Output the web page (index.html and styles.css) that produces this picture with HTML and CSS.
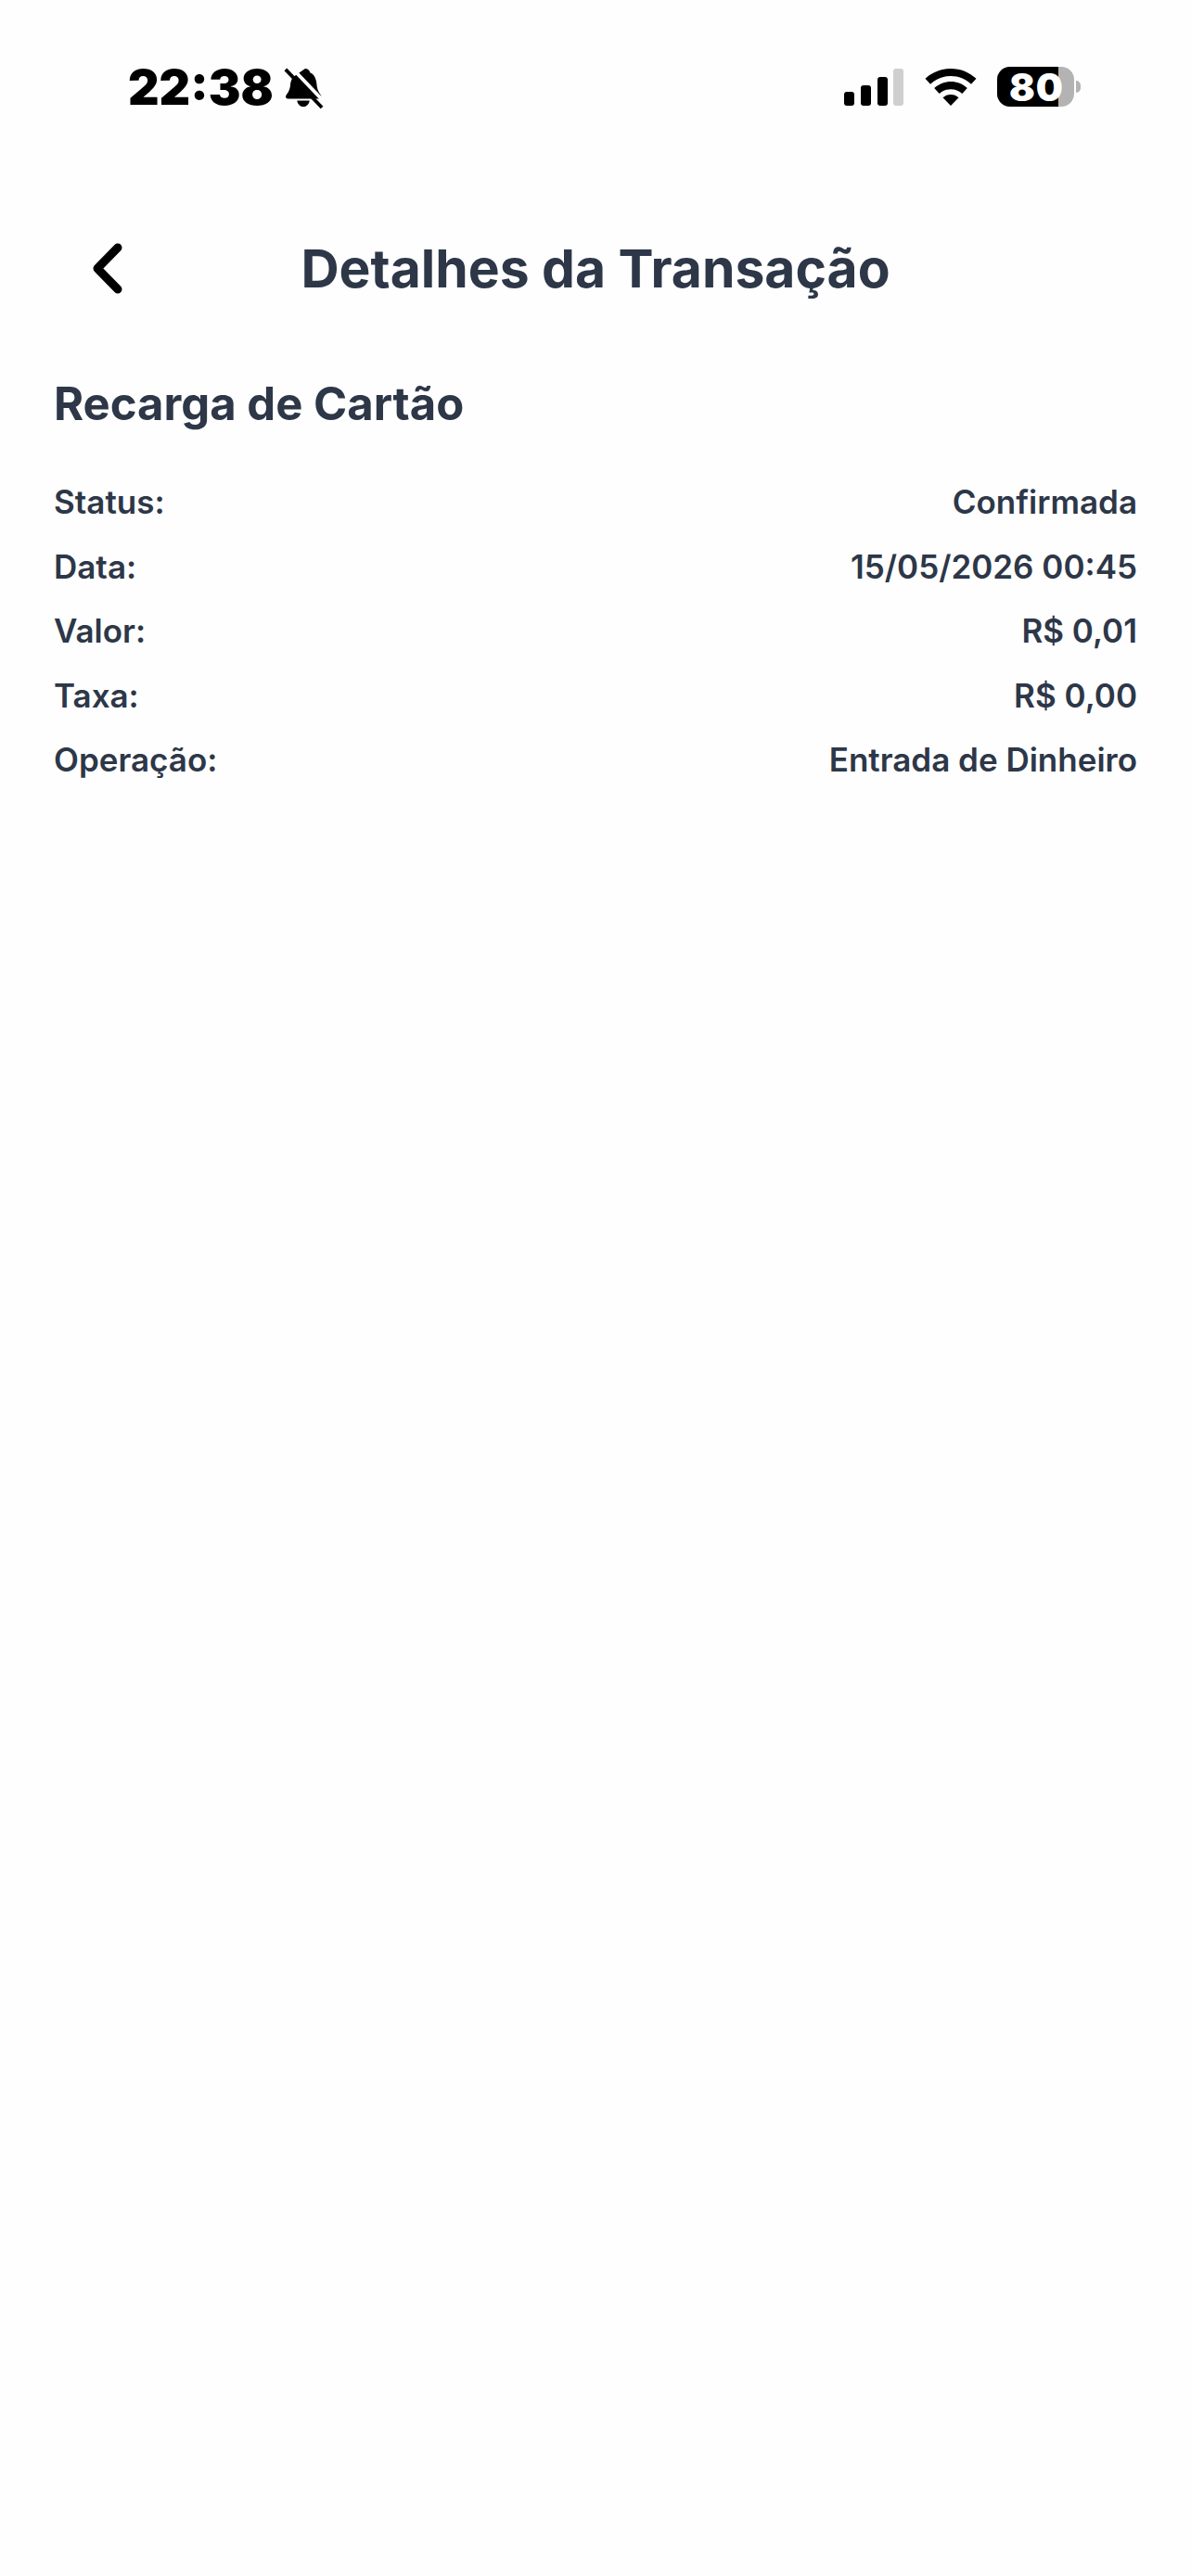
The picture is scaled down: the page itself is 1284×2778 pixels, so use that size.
FILE: index.html
```html
<!DOCTYPE html>
<html lang="pt-BR">
<head>
  <meta charset="UTF-8">
  <title>Detalhes da Transação</title>
  <link rel="stylesheet" href="styles.css">
</head>
<body>
  <div class="status_bar">
    <div class="status_left">
      <span class="clock">22:38</span>
      <svg class="bell" width="44" height="46" viewBox="0 0 46 46">
        <path d="M25 1c3 0 5 2 5.600 4.500C35 7.500 37.500 12 38 18c.4 5 1.500 9 4.500 12.500 1.500 1.800.8 4.500-2 4.500H6c-2.800 0-3.600-2.700-2-4.500C7 27 8.200 23 8.500 18 9 15 10 13 11 11z"/>
        <path d="M16 37h14c-.5 4-3.500 7-7 7s-6.500-3-7-7z"/>
        <path class="bell_gap" d="M7 -3L49 41"/>
        <path class="bell_slash" d="M3 2L44 45"/>
      </svg>
    </div>
    <div class="status_right">
      <svg class="signal" width="65" height="40" viewBox="0 0 65 40">
        <rect x="0" y="25" width="11" height="15" rx="3"/>
        <rect x="18" y="18" width="11" height="22" rx="3"/>
        <rect x="36" y="9" width="11" height="31" rx="3"/>
        <rect class="signal_off" x="53" y="0" width="11" height="40" rx="3"/>
      </svg>
      <svg class="wifi" width="56" height="40" viewBox="0 0 56 40">
        <path d="M28 0c10.500 0 20 4 27.500 10.800l-5.500 6C44 11.300 36.500 8 28 8S12 11.300 6 16.800l-5.500-6C8 4 17.500 0 28 0z"/>
        <path d="M28 14c6.800 0 13 2.600 17.800 7l-5.500 6C37 24 32.700 22.200 28 22.200S19 24 15.700 27l-5.500-6C15 16.600 21.200 14 28 14z"/>
        <path d="M28 28c3.300 0 6.300 1.200 8.500 3.300L28 40l-8.500-8.700C21.700 29.200 24.700 28 28 28z"/>
      </svg>
      <div class="battery">
        <div class="battery_body">
          <div class="battery_level"></div>
          <span class="battery_text">80</span>
        </div>
        <div class="battery_nub"></div>
      </div>
    </div>
  </div>

  <div class="top_bar">
    <svg class="back" width="34" height="56" viewBox="0 0 34 56">
      <path d="M28 5L6 27.500 28 50"/>
    </svg>
    <h1 class="page_title">Detalhes da Transação</h1>
  </div>

  <div class="details">
    <h2 class="details_title">Recarga de Cartão</h2>
    <div class="row"><span>Status:</span><span>Confirmada</span></div>
    <div class="row"><span>Data:</span><span>15/05/2026 00:45</span></div>
    <div class="row"><span>Valor:</span><span>R$ 0,01</span></div>
    <div class="row"><span>Taxa:</span><span>R$ 0,00</span></div>
    <div class="row"><span>Operação:</span><span>Entrada de Dinheiro</span></div>
  </div>
</body>
</html>
```

FILE: styles.css
```css
html,body{
  margin:0;
  padding:0;
}
body{
  width:1284px;
  height:2778px;
  overflow:hidden;
  background:#fefefe;
  color:#2d3748;
  font-family:Inter,"Liberation Sans",sans-serif;
}
.status_bar{
  display:flex;
  justify-content:space-between;
  align-items:center;
  height:190px;
  padding:0 119px 0 138px;
  box-sizing:border-box;
  color:#000;
}
.status_left{
  display:flex;
  align-items:center;
  gap:10px;
}
.clock{
  font-size:52px;
  line-height:60px;
  font-weight:900;
}
.bell{
  fill:#000;
}
.bell_gap{
  stroke:#fefefe;
  stroke-width:4;
}
.bell_slash{
  stroke:#000;
  stroke-width:4;
}
.status_right{
  display:flex;
  align-items:center;
  margin-bottom:3px;
}
.signal{
  fill:#000;
  margin-right:22px;
}
.signal_off{
  fill:#cfcfcf;
}
.wifi{
  fill:#000;
  margin-right:22px;
}
.battery{
  display:flex;
  align-items:center;
  gap:2px;
}
.battery_body{
  position:relative;
  width:83px;
  height:43px;
  border-radius:14px;
  background:#b3b3b3;
}
.battery_level{
  width:66px;
  height:100%;
  border-radius:14px 0 0 14px;
  background:#000;
}
.battery_text{
  position:absolute;
  top:-1px;
  left:13px;
  font-size:41px;
  line-height:46px;
  letter-spacing:1px;
  font-weight:900;
  color:#fff;
}
.battery_nub{
  width:5px;
  height:13px;
  border-radius:0 6px 6px 0;
  background:#b3b3b3;
}
.top_bar{
  display:grid;
  grid-template-columns:1fr auto 1fr;
  align-items:center;
  height:200px;
  padding:0 0 0 99px;
  margin-right:99px;
}
.back{
  fill:none;
  stroke:#000;
  stroke-width:9;
  stroke-linecap:round;
  stroke-linejoin:round;
}
.page_title{
  margin:0;
  font-size:57px;
  line-height:70px;
  font-weight:700;
  white-space:nowrap;
}
.details{
  padding:18px 58px 0;
}
.details_title{
  margin:0 0 43px 0;
  font-size:49px;
  line-height:56px;
  font-weight:700;
}
.row{
  display:flex;
  justify-content:space-between;
  height:69.5px;
  font-size:35px;
  line-height:69.5px;
  font-weight:600;
}
```
